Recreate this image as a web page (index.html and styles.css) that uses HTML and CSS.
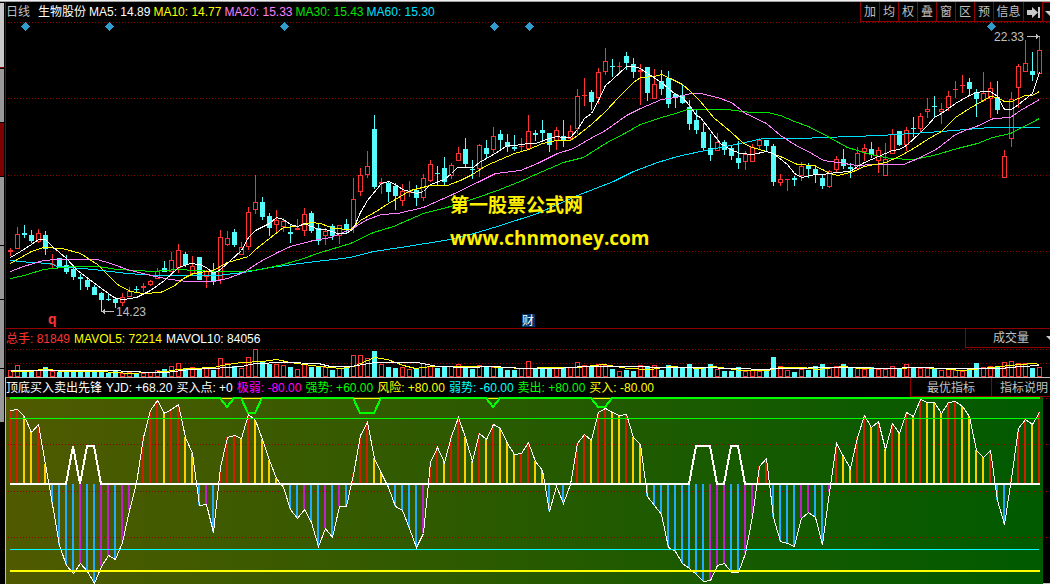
FILE: index.html
```html
<!DOCTYPE html>
<html lang="zh-CN">
<head>
<meta charset="utf-8">
<title>生物股份 日线</title>
<link rel="stylesheet" href="styles.css">
</head>
<body>
<div class="ribbon"></div>
<div class="workspace">
  <nav class="rail" aria-label="页签">
    <span class="tab tab-light"></span>
    <span class="tab tab-first"></span>
    <span class="tab tab-active"></span>
    <span class="tab tab-a"></span>
    <span class="tab tab-b"></span>
    <span class="tab tab-c"></span>
    <span class="tab tab-b"></span>
  </nav>
  <main class="panels">
    <section class="panel price">
      <header class="bar">
        <div class="legend">
          <span class="grey period">日线</span>
          <span class="white">生物股份</span>
          <span class="white">MA5: 14.89</span>
          <span class="yellow">MA10: 14.77</span>
          <span class="pink">MA20: 15.33</span>
          <span class="green">MA30: 15.43</span>
          <span class="cyan">MA60: 15.30</span>
        </div>
        <div class="tools">
          <button class="tool">加</button>
          <button class="tool">均</button>
          <button class="tool">权</button>
          <button class="tool">叠</button>
          <button class="tool">窗</button>
          <button class="tool">区</button>
          <button class="tool">预</button>
          <button class="tool tool-info">信息</button>
          <button class="tool" aria-label="移到最后"><svg class="icon" width="13" height="13" viewBox="0 0 13 13"><path d="M0 4h5V1l6 5.500-6 5.500V9H0z M11 1h2v11h-2z"/></svg></button>
          <button class="tool tool-more" aria-label="更多"><svg class="icon" width="5" height="5" viewBox="0 0 5 5"><path d="M0 0h5v5z"/></svg></button>
        </div>
      </header>
      <svg class="chart price-chart" id="price" viewBox="6 22 1044 306" preserveAspectRatio="none"></svg>
    </section>
    <section class="panel volume">
      <header class="bar">
        <div class="legend legend-wide">
          <span class="red">总手: 81849</span>
          <span class="yellow">MAVOL5: 72214</span>
          <span class="white">MAVOL10: 84056</span>
        </div>
        <label class="picker">
          <select class="picker-select" aria-label="副图指标"><option>成交量</option></select>
          <svg class="icon" width="4" height="5" viewBox="0 0 4 5"><path d="M0 0h4v4z"/></svg>
        </label>
      </header>
      <svg class="chart volume-chart" id="volume" viewBox="6 348 1044 29" preserveAspectRatio="none"></svg>
    </section>
    <section class="panel signal">
      <header class="bar">
        <div class="legend legend-wide">
          <span class="white">顶底买入卖出先锋</span>
          <span class="white">YJD: +68.20</span>
          <span class="white">买入点: +0</span>
          <span class="magenta">极弱: -80.00</span>
          <span class="lime">强势: +60.00</span>
          <span class="yellow">风险: +80.00</span>
          <span class="aqua">弱势: -60.00</span>
          <span class="lime">卖出: +80.00</span>
          <span class="yellow">买入: -80.00</span>
        </div>
        <div class="tools">
          <button class="tool tool-best">最优指标</button>
          <button class="tool tool-help">指标说明</button>
        </div>
      </header>
      <svg class="chart signal-chart" id="signal" viewBox="6 397 1044 187" preserveAspectRatio="none"></svg>
    </section>
  </main>
</div>
<script src="chart.js"></script>
</body>
</html>
```
FILE: styles.css
```css
* {
  box-sizing: border-box;
}

body {
  margin: 0;
  min-height: 100vh;
  display: flex;
  flex-direction: column;
  background: #000;
  color: #c0c0c0;
  font: 12px/21px "Liberation Sans", "Noto Sans CJK SC", sans-serif;
  overflow: hidden;
}

.ribbon {
  height: 2px;
  background: #f0f0f0;
  border-bottom: 1px solid #a0a0a0;
}

.workspace {
  display: flex;
  flex: 1;
}

.rail {
  width: 5px;
  flex: none;
  display: flex;
  flex-direction: column;
  gap: 1px;
  padding: 1px 1px 0 0;
}

.tab {
  background: #999;
}

.tab-light {
  height: 65px;
  background: #c8c8c8;
  border-bottom: 1px solid #900000;
}

.tab-first {
  height: 53px;
}

.tab-active {
  height: 53px;
  background: #800000;
}

.tab-a {
  height: 68px;
}

.tab-b {
  height: 53px;
}

.tab-c {
  height: 68px;
}

.panels {
  flex: 1;
  min-width: 0;
  display: flex;
  flex-direction: column;
}

.panel {
  display: flex;
  flex-direction: column;
  border-left: 1px solid #900000;
}

.volume {
  border-top: 1px solid #900000;
}

.signal {
  flex: 1;
  border-left-color: #c0c0c0;
  border-top: 1px solid #c0c0c0;
}

.bar {
  display: flex;
  justify-content: space-between;
  height: 19px;
}

.price .bar {
  height: 20px;
}

.legend {
  display: flex;
  gap: 3px;
  white-space: nowrap;
}

.legend-wide {
  gap: 4px;
}

.period {
  padding-right: 5px;
}

.white { color: #fff; }
.grey { color: #c0c0c0; }
.yellow { color: #ff0; }
.pink { color: #ff80ff; }
.green { color: #00e600; }
.cyan { color: #00e0ff; }
.red { color: #ff3232; }
.magenta { color: #f0f; }
.lime { color: #0f0; }
.aqua { color: #0ff; }

.tools {
  display: flex;
}

.tool {
  display: flex;
  align-items: center;
  justify-content: center;
  width: 19px;
  padding: 2px 0 0;
  border: 0 solid #900000;
  border-width: 0 0 1px 1px;
  background: #000;
  color: #c0c0c0;
  font: inherit;
  white-space: nowrap;
}

.tool-info {
  width: 30px;
}

.tool-more {
  width: 8px;
  justify-content: flex-end;
  border-top-width: 1px;
}

.tool-best {
  width: 81px;
}

.tool-help {
  width: 59px;
  padding-left: 6px;
}

.icon {
  display: block;
  flex: none;
  fill: #c8c8c8;
}

.picker {
  display: flex;
  align-items: center;
  width: 85px;
  border: 0 solid #900000;
  border-width: 0 0 1px 1px;
}

.picker-select {
  appearance: none;
  flex: 1;
  min-width: 0;
  height: 18px;
  padding: 1px 0 0 27px;
  border: 0;
  background: transparent;
  color: #c0c0c0;
  font: inherit;
  line-height: 17px;
}

.chart {
  display: block;
  width: 100%;
  shape-rendering: crispEdges;
}

.price-chart {
  height: 306px;
}

.volume-chart {
  height: 29px;
}

.signal-chart {
  height: 187px;
}

.grid {
  stroke: #900000;
  stroke-dasharray: 1 2;
}

.line {
  fill: none;
}

.thick {
  stroke-width: 2;
}

.tag {
  font-size: 12px;
  fill: #c0c0c0;
}

.tag-q {
  font-size: 14px;
  font-weight: bold;
  fill: #ff3232;
}

.tag-news {
  fill: #fff;
}

.mark {
  fill: #fff000;
  font-weight: bold;
}

.mark-name {
  font-size: 19px;
}

.mark-site {
  font-family: "Open Sans", sans-serif;
  font-size: 19px;
}
```
FILE: chart.js
```js
const STEP = 7;
const FIRST = 10;
const RED = '#ff3232';
const CYAN = '#54fcfc';

// r = rising (hollow), c = falling (solid); high, body top, body bottom, low
const candles = `r248,250,252,256 r227,234,249,249 c225,233,235,238 c230,235,241,243 r229,233,242,243 c231,235,249,255 r254,264,265,268
c258,258,268,268 c255,265,272,274 c268,269,277,280 c274,277,279,290 c279,280,287,290 c285,287,295,295 c292,293,300,312
c294,299,300,301 c297,299,303,308 r293,297,303,306 r287,291,297,297 c286,289,290,292 r283,286,288,292 r280,281,285,286
r268,271,279,279 c261,268,272,272 r252,260,272,272 r244,250,268,273 c252,254,265,267 r256,266,274,276 c257,257,280,280
r270,271,277,288 c263,272,281,285 r230,237,280,284 r231,238,245,246 c229,232,245,247 r242,247,255,255 r207,212,247,250
r175,202,210,214 c197,202,217,220 c213,216,228,236 r210,220,225,233 r218,221,227,232 c225,232,234,243 r219,228,230,230
r208,214,231,236 c211,213,231,233 c224,228,241,245 r228,231,236,245 c224,226,236,240 r225,225,236,244 c219,224,230,233
r178,199,228,233 r168,175,192,196 r151,166,175,178 c115,129,187,189 r178,182,184,194 c182,183,192,202 c183,186,196,210
r184,191,201,206 r181,191,193,197 c185,190,198,206 r174,178,198,201 r160,164,181,182 c166,173,174,185 c157,168,182,185
r163,165,176,179 r147,153,161,161 c138,149,164,167 c160,169,170,179 r144,145,169,177 c140,148,154,158 r127,136,150,153
c130,134,140,149 c134,142,147,152 c135,147,149,151 r138,146,147,152 r115,131,149,150 c130,133,135,141 c120,130,133,140
c133,133,145,152 r127,130,141,150 c120,136,140,147 r125,131,139,140 r89,96,129,134 r78,95,96,106 c90,92,102,110
r68,72,98,104 r48,61,72,75 c59,66,67,77 r62,66,67,74 c52,56,63,70 c58,64,72,78 r64,70,72,105
c67,67,93,101 r69,84,99,99 c70,81,89,95 c71,78,104,108 c93,94,98,108 c85,95,103,104 c100,107,124,130
c110,120,130,134 c123,132,148,151 c134,148,155,161 r133,142,151,151 c140,142,150,155 c146,148,156,160 c141,158,163,169
r151,154,162,170 r144,147,162,162 r138,140,146,150 c140,140,146,151 c144,146,182,186 r174,179,183,186 r179,179,180,191
c176,178,180,186 r162,166,176,181 c163,166,169,178 c165,169,174,183 c174,178,186,189 r170,171,187,188 r156,159,170,172
c149,159,166,169 c163,167,169,178 r147,153,169,170 r144,148,152,161 c142,149,155,158 r147,150,161,173 r143,159,176,176
r129,134,154,154 c131,131,145,146 r127,130,145,151 c117,128,129,137 r113,116,129,133 r98,109,112,118 c96,106,107,118
r103,109,112,124 r91,96,108,111 r81,89,90,98 r75,85,86,93 c78,82,89,96 c89,92,99,117 r72,93,101,102
r82,88,99,118 c81,97,110,114 r150,156,178,178 r92,99,139,147 r64,66,88,108 r40,63,72,72 c52,71,75,81
r36,50,74,74`.split(/\s+/).map(t => ({ up: t[0] === 'r', v: t.slice(1).split(',').map(Number) }));

const averages = [
  ['#00e0ff', '10,260 30,262 50,263 57,266 93,269 127,273 157,275 217,275 243,272 270,267 307,262 350,257 373,251 400,247 450,239 470,234 497,226 537,213 557,204 577,195 613,181 633,171 657,162 677,156 700,151 710,149 730,145 763,138 800,138 823,137 880,135 927,132 953,130 990,127 1013,127 1039,127'],
  ['#00e600', '10,278 24,275 43,269 73,266 97,266 117,269 153,271 177,269 213,271 243,271 260,269 283,264 300,259 320,252 350,243 373,232 393,226 423,213 450,206 477,197 497,190 522,180 535,174 563,162 583,157 605,143 626,132 640,124 661,117 675,113 687,109 700,109 727,109 750,112 767,112 780,115 794,121 808,126 829,137 847,147 870,154 890,158 913,159 933,155 957,148 977,143 992,137 1010,133 1039,118'],
  ['#ff80ff', '10,271 23,266 43,260 57,259 97,259 110,263 127,269 150,275 170,279 187,281 213,281 227,278 243,272 260,261 277,252 290,246 313,240 330,237 350,229 367,219 381,214 397,213 423,207 450,195 479,181 495,173 520,170 537,163 557,153 573,148 590,138 605,130 626,115 640,108 661,99 675,97 690,93 700,93 717,97 731,102 745,113 766,123 780,135 794,144 813,154 823,160 837,162 857,165 873,164 903,164 920,157 937,148 955,134 967,129 976,126 993,118 1010,117 1020,110 1039,99'],
  ['#ffff00', '10,263 31,251 43,247 62,248 80,253 97,264 117,284 130,291 143,293 160,292 173,286 183,278 193,273 213,270 227,262 241,258 248,256 255,249 269,238 283,227 297,226 310,222 320,223 333,228 350,229 360,220 374,212 388,203 400,196 410,190 430,185 437,185 447,185 460,180 472,174 486,165 500,159 514,153 528,149 542,143 556,140 570,140 577,135 591,124 605,111 619,96 633,82 640,77 654,76 661,74 670,78 682,84 690,91 700,101 713,117 730,131 743,143 752,147 766,151 780,156 797,164 813,165 822,169 829,173 838,175 853,171 864,166 885,162 899,156 913,148 927,139 941,131 955,117 969,108 983,100 990,96 997,97 1004,101 1011,101 1025,95 1032,95 1039,91'],
  ['#ffffff', '10,257 20,251 31,244 38,239 45,239 52,246 66,258 77,270 101,288 115,298 123,299 136,297 150,290 164,280 178,267 190,263 199,264 206,267 213,273 220,269 230,260 241,250 248,237 255,230 269,223 276,217 283,219 290,224 297,226 304,223 311,226 318,229 325,229 337,233 346,233 353,228 360,212 367,200 381,183 388,181 395,184 402,189 409,191 416,193 423,191 430,184 444,179 451,173 457,167 473,167 479,162 493,154 507,145 514,145 528,143 535,143 549,138 556,136 563,137 570,137 577,129 584,118 591,113 598,100 605,85 612,79 626,66 633,66 640,68 647,73 661,82 675,94 682,97 689,105 696,115 700,117 710,130 720,143 730,149 740,153 752,154 766,151 773,153 787,164 794,173 801,177 815,174 822,174 836,172 850,171 857,166 864,162 878,156 892,150 899,149 906,145 920,132 927,125 934,117 941,113 955,103 969,95 976,92 983,91 990,91 997,96 1004,109 1011,109 1018,104 1032,93 1039,72']
];

const volumes = [370,365,371,371,370,367,371,372,371,372,371,371,371,371,373,371,373,372,373,373,372,370,369,366,363,368,367,368,367,370,358,363,366,368,357,349,362,364,364,365,367,369,364,367,367,367,370,368,366,
  355,355,358,351,364,367,368,367,369,368,363,366,368,366,366,364,366,369,365,367,367,367,370,370,368,361,368,369,368,368,367,367,362,365,366,364,365,369,371,370,371,365,366,365,370,365,367,367,364,368,
  367,364,369,371,371,367,371,370,371,370,357,366,370,372,369,370,366,364,368,366,364,368,367,369,367,369,369,366,369,364,368,368,368,368,370,369,370,371,370,363,367,366,366,362,361,363,363,368,367];

const volumeAverages = [
  ['#ffff00', '10,371 31,371 45,368 60,371 100,371 130,373 165,371 178,369 190,368 213,367 227,364 241,362 262,361 276,359 290,362 311,365 340,368 353,366 374,357 387,359 403,365 415,368 430,366 483,366 523,368 550,367 577,367 603,364 627,368 650,369 670,366 700,368 713,366 727,368 740,370 767,370 780,367 803,367 817,369 843,366 860,368 897,368 917,367 940,368 960,370 973,369 1000,366 1020,364 1033,363 1039,364'],
  ['#ffffff', '10,370 110,370 150,372 165,372 190,369 213,368 241,366 255,363 283,362 318,363 330,366 350,366 375,362 417,362 437,366 467,367 493,366 523,368 557,368 583,366 627,366 670,367 700,367 733,368 767,369 773,368 843,367 897,368 907,367 960,368 1000,368 1020,366 1039,365']
];

const ZERO = 484;
const signal = [410,409,416,432,424,464,504,545,565,573,563,571,583,566,555,559,542,510,483,437,410,400,413,409,404,437,453,505,504,532,467,437,435,438,414,420,439,460,478,487,509,518,509,522,546,528,537,506,506,
  474,435,422,458,473,487,506,510,528,547,533,462,447,462,436,417,437,461,433,439,424,428,443,454,453,442,461,470,511,486,503,484,443,434,440,412,408,412,415,414,437,444,496,505,514,547,551,563,568,574,
  581,580,565,563,572,572,553,516,466,458,517,541,543,546,518,512,517,544,492,443,456,468,437,415,427,421,449,423,433,412,416,399,402,402,413,402,401,406,416,450,457,450,500,524,478,428,419,424,412];

const x = i => FIRST + i * STEP;
const rect = (l, t, w, h, fill) => `<rect x="${l}" y="${t}" width="${w}" height="${h}" fill="${fill}"/>`;
const line = (pts, color, cls = '') => `<polyline class="line ${cls}" stroke="${color}" points="${pts}"/>`;
const half = pts => pts.split(' ').map(p => p.split(',').map(n => +n + 0.5).join()).join(' ');
const grid = ys => ys.map(y => `<line class="grid" x1="8" x2="1050" y1="${y + 0.5}" y2="${y + 0.5}"/>`).join('');
const hollow = (l, t, h) => `<rect x="${l + 0.5}" y="${t + 0.5}" width="4" height="${h - 1}" fill="#000" stroke="${RED}"/>`;

function drawPrice() {
  let s = grid([22, 98, 175, 251]);
  candles.forEach(({ up, v: [high, top, bottom, low] }, i) => {
    const c = x(i);
    s += rect(c, high, 1, Math.max(1, low - high), up ? RED : CYAN);
    const h = bottom - top;
    s += up && h > 2 ? hollow(c - 2, top, h) : rect(c - 2, top, 5, h, up ? RED : CYAN);
  });
  averages.forEach(([color, pts]) => { s += line(half(pts), color); });
  [25, 109, 284, 494, 529, 991].forEach(d => {
    s += `<path fill="#2e9ccc" d="M${d + 0.5} 22l4.500 4.500-4.500 4.500-4.500-4.500z"/>`;
  });
  s += '<path fill="none" stroke="#c0c0c0" d="M102 311.500h12M1027 36.500h12"/>';
  s += '<path fill="#c0c0c0" d="M101 311.500l4-2.500v5zM1040 36.500l-4-2.500v5z"/>';
  s += '<text class="tag" x="116" y="316">14.23</text><text class="tag" x="994" y="41">22.33</text>';
  s += '<text class="tag-q" x="48" y="324">q</text>';
  s += rect(522, 314, 13, 13, '#003366') + '<text class="tag tag-news" x="522" y="325">财</text>';
  s += '<text class="mark mark-name" x="450" y="212">第一股票公式网</text>';
  s += '<text class="mark mark-site" x="450" y="245">www.chnmoney.com</text>';
  document.getElementById('price').innerHTML = s;
}

function drawVolume() {
  let s = grid([349, 363]);
  volumes.forEach((top, i) => {
    const l = x(i) - 2;
    s += candles[i].up ? hollow(l, top, 377 - top) : rect(l, top, 5, 377 - top, CYAN);
  });
  volumeAverages.forEach(([color, pts]) => { s += line(half(pts), color); });
  document.getElementById('volume').innerHTML = s;
}

function drawSignal() {
  let s = '<defs><linearGradient id="field"><stop offset="0" stop-color="#505a00"/><stop offset="1" stop-color="#005a00"/></linearGradient></defs>';
  s += rect(6, 397, 1037, 187, 'url(#field)') + rect(1043, 583, 7, 1, '#c0c0c0');
  s += grid([398, 444, 491, 537]);
  signal.forEach((y, i) => {
    const rising = i === 0 || y < signal[i - 1];
    if (y < ZERO) s += rect(x(i) - 1, y, 2, ZERO - y, rising ? '#cc2200' : '#ffcc00');
    else s += rect(x(i) - 1, ZERO, 2, y - ZERO, rising ? '#bb22cc' : '#22aaff');
  });
  s += line(half(signal.map((y, i) => `${x(i)},${y}`).join(' ')), '#fff');
  s += rect(10, 418, 1029, 1, '#00ff00') + rect(10, 549, 1029, 1, '#00ffff') + rect(10, 570, 1030, 2, '#ffff00');
  s += line('10,484 66,484 73,446 80,484 87,446 94,446 101,484 689,484 696,446 710,446 717,484 724,484 731,446 738,446 745,484 1040,484', '#fff', 'thick');
  s += line('220,398.5 262,398.5', '#ff0') + line('353,398.5 381,398.5', '#ff0') + line('486,398.5 500,398.5', '#ff0') + line('591,398.5 612,398.5', '#ff0');
  s += line('10,398 220,398 227,407 234,398 241,398 248,413 255,413 262,398 353,398 360,413 374,413 381,398 486,398 493,407 500,398 591,398 598,407 605,407 612,398 1040,398', '#0f0', 'thick');
  document.getElementById('signal').innerHTML = s;
}

drawPrice();
drawVolume();
drawSignal();
```
